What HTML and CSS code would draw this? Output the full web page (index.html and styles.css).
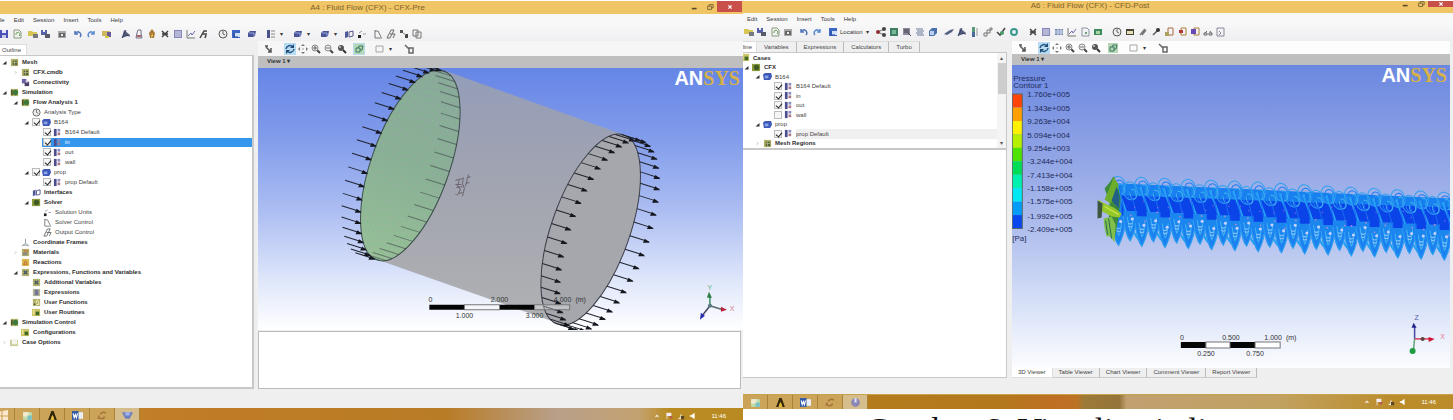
FILE: index.html
```html
<!DOCTYPE html>
<html lang="en">
<head>
<meta charset="utf-8">
<title>Fluid Flow (CFX)</title>
<link rel="stylesheet" href="styles.css">
</head>
<body>
<main class="desk">
  <section class="screen pre">
    <header class="title"><h1>A4 : Fluid Flow (CFX) - CFX-Pre</h1>
      <div class="winctl"><button aria-label="Minimize" data-i="min"></button><button aria-label="Restore" data-i="restore"></button><button class="close" aria-label="Close" data-i="close"></button></div>
    </header>
    <nav class="menu"><button>File</button><button>Edit</button><button>Session</button><button>Insert</button><button>Tools</button><button>Help</button></nav>
    <div class="tools" data-icons="save reload | folder disks | print | undo redo | folder2 || cone jar flame cross sheet chart fx || clock bluebox | block || tree2 v || block v || block v | pages dots | axes clip parts copy"></div>
    <div class="body">
      <aside class="side">
        <div class="tabs"><button class="on">Outline</button></div>
        <ul class="tree">
          <li class="l0 b"><i data-i="open"></i><i data-i="mesh"></i><span>Mesh</span></li>
          <li class="l1 b"><i data-i="shut"></i><i data-i="mesh"></i><span>CFX.cmdb</span></li>
          <li class="l1 b"><i></i><i data-i="conn"></i><span>Connectivity</span></li>
          <li class="l0 b"><i data-i="open"></i><i data-i="globe"></i><span>Simulation</span></li>
          <li class="l1 b"><i data-i="open"></i><i data-i="globe"></i><span>Flow Analysis 1</span></li>
          <li class="l2"><i></i><i data-i="clock"></i><span>Analysis Type</span></li>
          <li class="l2"><i data-i="open"></i><label><input type="checkbox" checked><i data-i="dom"></i><span>B164</span></label></li>
          <li class="l3"><i></i><label><input type="checkbox" checked><i data-i="bound"></i><span>B164 Default</span></label></li>
          <li class="l3"><i></i><label class="sel"><input type="checkbox" checked><i data-i="bound"></i><span>in</span></label></li>
          <li class="l3"><i></i><label><input type="checkbox" checked><i data-i="bound"></i><span>out</span></label></li>
          <li class="l3"><i></i><label><input type="checkbox" checked><i data-i="bound"></i><span>wall</span></label></li>
          <li class="l2"><i data-i="open"></i><label><input type="checkbox" checked><i data-i="dom"></i><span>prop</span></label></li>
          <li class="l3"><i></i><label><input type="checkbox" checked><i data-i="bound"></i><span>prop Default</span></label></li>
          <li class="l2 b"><i></i><i data-i="pages"></i><span>Interfaces</span></li>
          <li class="l2 b"><i data-i="open"></i><i data-i="solver"></i><span>Solver</span></li>
          <li class="l3"><i></i><i data-i="dots"></i><span>Solution Units</span></li>
          <li class="l3"><i></i><i data-i="axes"></i><span>Solver Control</span></li>
          <li class="l3"><i></i><i data-i="clip"></i><span>Output Control</span></li>
          <li class="l1 b"><i></i><i data-i="frame"></i><span>Coordinate Frames</span></li>
          <li class="l1 b"><i data-i="shut"></i><i data-i="mat"></i><span>Materials</span></li>
          <li class="l1 b"><i></i><i data-i="react"></i><span>Reactions</span></li>
          <li class="l1 b"><i data-i="open"></i><i data-i="expr"></i><span>Expressions, Functions and Variables</span></li>
          <li class="l2 b"><i></i><i data-i="expr"></i><span>Additional Variables</span></li>
          <li class="l2 b"><i></i><i data-i="calc"></i><span>Expressions</span></li>
          <li class="l2 b"><i></i><i data-i="ufn"></i><span>User Functions</span></li>
          <li class="l2 b"><i></i><i data-i="urt"></i><span>User Routines</span></li>
          <li class="l0 b"><i data-i="open"></i><i data-i="globe"></i><span>Simulation Control</span></li>
          <li class="l1 b"><i></i><i data-i="urt"></i><span>Configurations</span></li>
          <li class="l0 b"><i data-i="shut"></i><i data-i="doc"></i><span>Case Options</span></li>
        </ul>
      </aside>
      <section class="view">
        <div class="tools vt" data-icons="pick || rotate* move zoomin zoomout zoombox | fit* || square v || probe"></div>
        <div class="bar"><button>View 1 <span>▾</span></button></div>
        <div class="canvas">
          <svg id="tube" viewBox="258 68 484 263" preserveAspectRatio="xMidYMid slice" role="img" aria-label="Cylinder domain">
            <defs>
              <linearGradient id="gb" x1="0" y1="0" x2="0" y2="1"><stop offset="0" stop-color="#949db8"/><stop offset=".5" stop-color="#a3a5b0"/><stop offset="1" stop-color="#b0b1b3"/></linearGradient>
              <linearGradient id="gr" x1="0" y1="0" x2="0" y2="1"><stop offset="0" stop-color="#8ba89c"/><stop offset=".5" stop-color="#8cae98"/><stop offset="1" stop-color="#98bf98"/></linearGradient>
            </defs>
            <path fill="url(#gb)" d="M446 72 L627 137 L600 240 L556 323 L374 259Z"/>
            <ellipse cx="590" cy="230" rx="39" ry="100" transform="rotate(19.5 590 230)" fill="#a5a7ad" stroke="#3c3e48" stroke-width="1"/>
            <ellipse cx="410" cy="166" rx="39" ry="100" transform="rotate(19.5 410 166)" fill="url(#gr)" stroke="#3a4f48" stroke-width="1"/>
            <g id="weave" fill="none" stroke="#7cc486" stroke-width="1" opacity=".55"></g>
            <g id="arrows" stroke="#20232e" fill="#15171f" stroke-width="1"></g>
            <path d="M455 181l7-2M455 185l6 0M456 188l6-1M455 195l7-2M459 181l-2 5 3 4-3 6M463 178l-1 6 2 5-2 8M468 175l-3 12M466 179l4-2M465 184l4-1" fill="none" stroke="#6d6870" stroke-width="1"/>
            <g class="ruler"><path d="M429 305h35v5h-35zM499 305h35v5h-35z" fill="#050505"/><path d="M464 305h35v5h-35zM534 305h35v5h-35z" fill="#fff" fill-opacity=".3" stroke="#777" stroke-width="1"/>
              <text x="430" y="302">0</text><text x="499" y="302">2.000</text><text x="562" y="302">4.000</text><text x="580" y="302">(m)</text><text x="464" y="318">1.000</text><text x="534" y="318">3.000</text></g>
            <g stroke-width="1.5" fill="none"><path d="M709 306V296" stroke="#378a61"/><path d="M709 306l13 4" stroke="#5c6974"/><path d="M709 306l-7 9" stroke="#446"/></g>
            <path d="M706 298l2-6 3 6z" fill="#2f7c40"/><path d="M720 307l6 3-6 2z" fill="#b8213a"/><path d="M699 320l1-7 4 3z" fill="#2b2fb4"/><circle cx="709" cy="306" r="2" fill="#5a7a80"/>
            <g class="ax"><text x="709" y="290" fill="#62b07a">Y</text><text x="731" y="311" fill="#d77a90">X</text></g>
          </svg>
          <div class="logo"><b>AN</b><span>SYS</span></div>
        </div>
        <div class="out"></div>
      </section>
    </div>
    <footer class="task"><div class="apps"><button aria-label="Start" data-i="win"></button><button aria-label="Explorer" data-i="expl"></button><button aria-label="ANSYS" data-i="ans"></button><button aria-label="Word" data-i="word"></button><button aria-label="Mechanical" data-i="swirl"></button><button class="on" aria-label="CFX" data-i="cfx"></button></div><div class="tray"><i data-i="up"></i><i data-i="flag"></i><i data-i="net"></i><i data-i="vol"></i><time>11:46</time></div></footer>
  </section>

  <section class="screen post">
    <header class="title"><h1>A6 : Fluid Flow (CFX) - CFD-Post</h1>
      <div class="winctl"><button aria-label="Minimize" data-i="min"></button><button aria-label="Restore" data-i="restore"></button><button class="close" aria-label="Close" data-i="close"></button></div>
    </header>
    <nav class="menu"><button>Edit</button><button>Session</button><button>Insert</button><button>Tools</button><button>Help</button></nav>
    <div class="tools" data-icons="folder disks reload print | undo redo | bluebox =Location v | share greenbox sheetz lines cube | pencil cone legend inst check ring || cross sheet grid chart page greenpic || clock film brush pen noteo noter notep glasses out"></div>
    <div class="body">
      <aside class="side">
        <div class="tabs"><button class="on cut">Outline</button><button>Variables</button><button>Expressions</button><button>Calculators</button><button>Turbo</button></div>
        <div class="treebox">
          <ul class="tree">
            <li class="l0 b"><i></i><i data-i="urt"></i><span>Cases</span></li>
            <li class="l1 b"><i data-i="open"></i><i data-i="solver"></i><span>CFX</span></li>
            <li class="l2"><i data-i="open"></i><i data-i="dom"></i><span>B164</span></li>
            <li class="l3"><i></i><label><input type="checkbox" checked><i data-i="bound"></i><span>B164 Default</span></label></li>
            <li class="l3"><i></i><label><input type="checkbox" checked><i data-i="bound"></i><span>in</span></label></li>
            <li class="l3"><i></i><label><input type="checkbox" checked><i data-i="bound"></i><span>out</span></label></li>
            <li class="l3"><i></i><label><input type="checkbox"><i data-i="bound"></i><span>wall</span></label></li>
            <li class="l2"><i data-i="open"></i><i data-i="dom"></i><span>prop</span></li>
            <li class="l3"><i></i><label class="dim"><input type="checkbox" checked><i data-i="bound"></i><span>prop Default</span></label></li>
            <li class="l2 b"><i data-i="shut"></i><i data-i="mesh"></i><span>Mesh Regions</span></li>
          </ul>
          <div class="scroll"><span>▴</span><div class="thumb"></div><span>▾</span></div>
        </div>
        <div class="detail"></div>
      </aside>
      <section class="view">
        <div class="tools vt" data-icons="pick || rotate* move zoomin zoomout zoombox | fit || square v || probe"></div>
        <div class="bar"><button>View 1 <span>▾</span></button></div>
        <div class="canvas">
          <svg viewBox="1012 65 438 302" preserveAspectRatio="xMidYMid slice" role="img" aria-label="Propeller wake pressure">
            <g id="legend"></g>
            <g class="key"><text x="1014" y="81">Pressure</text><text x="1014" y="88">Contour 1</text><text x="1013" y="240">[Pa]</text>
              <text x="1028" y="97">1.760e+005</text><text x="1028" y="111">1.343e+005</text><text x="1028" y="124">9.263e+004</text><text x="1028" y="138">5.094e+004</text><text x="1028" y="151">9.254e+003</text><text x="1028" y="164">-3.244e+004</text><text x="1028" y="178">-7.413e+004</text><text x="1028" y="191">-1.158e+005</text><text x="1028" y="204">-1.575e+005</text><text x="1028" y="218">-1.992e+005</text><text x="1028" y="231">-2.409e+005</text></g>
            <g id="wake" fill="none"></g>
            <path d="M1114 176l4 8 3 14-2 18-4 22-2-2-4-14 1-20-5-14 5-6z" fill="#3d8a3c"/>
            <path d="M1114 177l-3 8-6 14 6 4 6-10 2-9z" fill="#6cae2c"/><path d="M1117 186l3 10-1 12-7-8z" fill="#225f86"/>
            <path d="M1099 199l4 3 11 5 8 6-2 4-8-1-9-5-3 7-2-4z" fill="#93c72c"/><path d="M1098 200l5 3-1 14-4 1z" fill="#3c5642"/><path d="M1104 218l8-2 4 8-1 18-4-6-4 0-2-8z" fill="#7fbf4a"/><path d="M1109 218l3 20M1106 220l2 14" stroke="#2a6d58"/>
            <path d="M1105 206l14 8" stroke="#d0e94c"/>
            <g class="ruler"><path d="M1181 341h25v6h-25zM1230 341h25v6h-25z" fill="#050505"/><path d="M1206 341h24v6h-24zM1255 341h25v6h-25z" fill="#fff" stroke="#777" stroke-width="1"/>
              <text x="1182" y="339">0</text><text x="1231" y="339">0.500</text><text x="1273" y="339">1.000</text><text x="1291" y="339">(m)</text><text x="1206" y="355">0.250</text><text x="1255" y="355">0.750</text></g>
            <g fill="none" stroke-width="1.5"><path d="M1414 338v-12" stroke="#4448a0"/><path d="M1414 338h15" stroke="#d4405a"/><path d="M1414 338l-1 10" stroke="#67a277"/></g>
            <path d="M1411 327l2-5 3 5z" fill="#23238c"/><path d="M1428 336l6 2-6 3z" fill="#d01230"/><circle cx="1412" cy="350" r="3" fill="#1f9c40"/><circle cx="1422" cy="338" r="2" fill="#5c4440"/>
            <g class="ax"><text x="1416" y="319" fill="#5358a8">Z</text><text x="1442" y="338" fill="#e07a98">X</text></g>
          </svg>
          <div class="logo"><b>AN</b><span>SYS</span></div>
        </div>
        <div class="tabs low"><button class="on">3D Viewer</button><button>Table Viewer</button><button>Chart Viewer</button><button>Comment Viewer</button><button>Report Viewer</button></div>
      </section>
    </div>
    <footer class="task"><div class="apps"><button aria-label="Explorer" data-i="expl"></button><button aria-label="ANSYS" data-i="ans"></button><button aria-label="Word" data-i="word"></button><button aria-label="Mechanical" data-i="swirl"></button><button class="on" aria-label="CFD-Post" data-i="post"></button></div><div class="tray"><i data-i="up"></i><i data-i="flag"></i><i data-i="net"></i><i data-i="vol"></i><time>11:46</time></div></footer>
    <p class="caption">Gambar 6. Visualisasi aliran</p>
  </section>
</main>
<script src="draw.js"></script>
</body>
</html>
```

FILE: styles.css
```css
* { box-sizing: border-box; }
body { margin: 0; background: #fff; font: 6px/10px "Liberation Sans", Arial, sans-serif; color: #333; overflow: hidden; }
button { font: inherit; color: inherit; background: none; border: 0; padding: 0; margin: 0; }
.desk { display: grid; grid-template-columns: 743fr 710fr; height: 100vh; }
.screen { display: flex; flex-direction: column; min-width: 0; min-height: 0; padding-top: 1px; overflow: hidden; }
.title { position: relative; flex: none; height: 13px; background: #efc565; overflow: hidden; }
.post .title { height: 12px; }
.title h1 { margin: 0; text-align: center; font: 8px/13px "Liberation Sans", Arial, sans-serif; color: #80622c; }
.post .title h1 { line-height: 10px; padding-right: 16px; }
.pre .title h1 { padding-right: 8px; }
.winctl { position: absolute; right: 1px; top: 0; display: flex; height: 11px; }
.post .winctl { right: 0; height: 6px; }
.winctl button { width: 15px; display: flex; align-items: center; justify-content: center; }
.winctl .close { width: 25px; background: #c9504a; }
.winctl svg { width: 8px; height: 8px; }
.menu { flex: none; display: flex; gap: 9px; height: 12px; padding-left: 4px; background: #f8f8f9; color: #3a3a3a; }
.pre .menu { margin-left: -9px; }
.tools { flex: none; display: flex; align-items: center; height: 15px; background: linear-gradient(#f7f7f8, #efeff1); overflow: hidden; }
.post > .tools { height: 14px; }
.pre > .tools { margin-left: -2px; height: 15px; }
.tools button { flex: none; display: flex; align-items: center; justify-content: center; min-width: 12px; height: 12px; margin-right: 1px; }
.tools button.hot { background: #b7dcf2; }
.tools svg { width: 10px; height: 10px; flex: none; }
.tools .more { min-width: 7px; width: 7px; font-size: 6px; }
.tools .gap { flex: none; width: 3px; }
.body { flex: 1; min-height: 0; display: grid; background: #efeff0; }
.pre .body { grid-template-columns: 254fr 485fr; column-gap: 4px; padding-bottom: 19px; }
.post .body { grid-template-columns: 264fr 438fr; column-gap: 5px; padding: 2px 3px 16px 0; }
.side, .view { display: flex; flex-direction: column; min-width: 0; min-height: 0; }
.pre .side { padding-top: 3px; }
.tabs { flex: none; display: flex; height: 11px; color: #444; }
.tabs button { padding: 0 7px; border-right: 1px solid #bbb; border-top: 1px solid #ddd; white-space: nowrap; }
.tabs .on { background: #fff; padding: 0 5px 0 2px; border-color: #ddd; }
.tabs .cut { width: 14px; direction: rtl; overflow: hidden; padding: 0 4px 0 0; }
.low { height: 10px; }
.low .on { padding: 0 6px; }
.low button { border-top: 0; border-bottom: 1px solid #ccc; padding: 0 6px; line-height: 9px; }
.tree { flex: 1; min-height: 0; margin: 0; padding: 1px 0 0; list-style: none; background: #fff; color: #444; }
.pre .tree { border: solid #c8c8cb; border-width: 1px 2px 2px 0; }
.tree li, .tree label { display: flex; align-items: center; height: 10px; white-space: nowrap; }
.tree label { flex: 1; gap: 2px; padding-left: 1px; margin-left: 1px; height: 9px; }
.tree i { flex: none; display: flex; width: 9px; margin-right: 3px; }
.tree li > i:first-child { width: 8px; margin-right: 2px; justify-content: center; }
.tree label i { margin-right: 1px; }
.tree li > i:first-child + label { margin-left: -1px; }
.tree i svg { width: 9px; height: 9px; }
.tree li > i:first-child svg { width: 5px; height: 5px; }
.l1 { padding-left: 11px; } .l2 { padding-left: 22px; } .l3 { padding-left: 33px; }
.b { font-weight: bold; color: #2c2c2c; }
.tree .sel { background: #3596ee; color: #fff; }
.tree .dim span { flex: 1; background: #f0f0f1; }
.tree input { appearance: none; position: relative; flex: none; width: 8px; height: 8px; margin: 0; border: 1px solid #bcbcbc; background: #f6f6f6; }
.tree input:checked::after { content: ""; position: absolute; left: 2px; top: 0; width: 3px; height: 5px; border: solid #222; border-width: 0 1px 1px 0; transform: rotate(40deg); }
.treebox { flex: none; display: flex; height: 98px; background: #fff; border: solid #c8c8cb; border-width: 1px 1px 2px 0; overflow: hidden; }
.treebox .tree { display: flex; flex-direction: column; margin-left: -12px; padding: 0; }
.treebox .tree li { flex: 1; min-height: 0; }
.scroll { width: 9px; display: flex; flex-direction: column; align-items: center; background: #f4f4f4; color: #555; font-size: 6px; }
.thumb { width: 8px; height: 31px; background: #cdcdcd; margin-bottom: auto; }
.detail { flex: 1; background: #fff; border: solid #c8c8cb; border-width: 0 1px 1px 0; }
.vt { height: 15px; background: #f6f6f7; padding-left: 5px; }
.vt .gap { width: 4px; }
.post .vt { height: 13px; background: #fdfdfd; }
.bar { flex: none; height: 12px; background: #bfbfc0; padding-left: 9px; font-weight: bold; color: #333; }
.post .bar { height: 11px; }
.canvas { position: relative; flex: 1; min-height: 0; background: linear-gradient(#6686e6, #7f9aea 25%, #adbef2 55%, #dde5fa 80%, #fff); overflow: hidden; }
.post .canvas { background: linear-gradient(#6b88e0, #8a9fe4 25%, #b0bfed 55%, #d8e2f8 80%, #fdfdff); }
.canvas > svg { display: block; width: 100%; height: 100%; }
.logo { position: absolute; right: 3px; top: 0; font-size: 20px; line-height: 21px; color: #fff; }
.logo span { font-family: "Liberation Serif", serif; font-weight: bold; color: #d6b04a; }
.out { flex: none; height: 58px; margin: 1px 2px 0 0; border: 1px solid #b9bcbf; background: #fff; }
.ruler text { font-size: 7px; fill: #333; text-anchor: middle; }
.ax text { font-size: 7px; text-anchor: middle; }
.key text { font-size: 8px; fill: #1f2d5c; }
.task { flex: none; display: flex; justify-content: space-between; height: 15px; background: linear-gradient(90deg, #c3842c, #bf7c26 30%, #b97c26 60%, #b8a08a 75%, #c4a270 86%, #b98c22 90%, #b98a22); color: #fff; }
.pre .task { margin-bottom: -3px; }
.post .task { background: linear-gradient(90deg, #b57f1e, #b3781c 36%, #bf6f24 44%, #bd7224 47%, #9c7a38 48%, #95743a 53%, #c2a070 54%, #c2a262 75%, #bb8c2a 92%); border-top: 1px solid #c6a24a; }
.apps { display: flex; }
.apps button { width: 25px; background: #cba45a; border-right: 1px solid #ab8238; display: flex; justify-content: center; align-items: center; }
.pre .apps { margin-left: -10px; }
.pre .apps .on, .apps .on { background: #d6be8c; }
.apps svg { width: 11px; height: 11px; }
.tray { display: flex; align-items: center; gap: 4px; padding-right: 17px; }
.tray i { display: flex; }
.tray svg { width: 8px; height: 8px; }
.tray time { margin-left: 10px; }
.caption { flex: none; margin: 4px 0 -27px; padding-left: 123px; font: 34px/34px "Liberation Serif", serif; color: #111; white-space: nowrap; }
```

FILE: draw.js
```javascript
const rect = (x, y, w, h, c) => `<rect x="${x}" y="${y}" width="${w}" height="${h}" fill="${c}"/>`;
const line = (d, c, w = 1) => `<path d="${d}" fill="none" stroke="${c}" stroke-width="${w}"/>`;
const fill = (d, c) => `<path d="${d}" fill="${c}"/>`;
const dot = (x, y, r, c) => `<circle cx="${x}" cy="${y}" r="${r}" fill="${c}"/>`;
const green = rect(1, 1, 8, 8, '#b3b26a');
const lens = line('M6 6l3 3', '#444', 2) + '<circle cx="4" cy="4" r="3" fill="#eee" stroke="#888"/>';
const icons = {
  min: rect(1, 6, 6, 2, '#5a4a2a'),
  restore: line('M2 4h5v4H2zM4 4V2h5v4H7', '#6a5528'),
  close: line('M3 3l4 4M7 3l-4 4', '#fff', 1.5),
  save: rect(1, 1, 8, 8, '#4a52b8') + rect(3, 1, 4, 3, '#e8e8f8') + rect(3, 6, 4, 3, '#c8cce8'),
  reload: line('M2 1h5l2 2v6H2z', '#8a9a80') + line('M4 6a2 2 0 1 1 3 1', '#5a9a4a'),
  folder: fill('M0 2h4l1 1h4v4H0z', '#d6c455') + rect(5, 5, 5, 4, '#77777f'),
  disks: rect(0, 1, 6, 5, '#5560a8') + rect(2, 1, 2, 2, '#eee') + rect(4, 5, 5, 4, '#555a68'),
  print: rect(1, 2, 8, 7, '#aaa') + rect(2, 4, 6, 4, '#666') + rect(4, 5, 2, 2, '#eee'),
  undo: line('M2 2v3h3M2 5a3 3 0 1 1 5 3', '#5074b8', 1.5),
  redo: line('M8 2v3H5M8 5a3 3 0 1 0-5 3', '#5a8ad0', 1.5),
  folder2: fill('M0 2h8v5H0z', '#cdb860') + rect(5, 3, 4, 5, '#6a5a9a') + rect(3, 7, 4, 2, '#d8cc40'),
  cone: fill('M1 9l2-8 6 5z', '#5a607c') + line('M1 9l4-8M4 6l5 1', '#333e66'),
  jar: line('M4 1h3v3l1 5H2l1-5z', '#77708a') + rect(3, 6, 4, 2, '#a66'),
  flame: fill('M5 0l3 4-1 5H3L2 4z', '#a87838') + fill('M5 4l1 3-2 2z', '#f2d060'),
  cross: line('M2 2l6 6M8 2l-6 6M2 5h6', '#454545', 1.5),
  sheet: rect(1, 1, 8, 8, '#8588b8') + line('M2 3h6M2 5h6M2 7h6', '#e4e4f4'),
  sheetz: rect(1, 1, 7, 7, '#8a8aa0') + line('M2 3h5M2 5h5M6 6l3 3', '#444'),
  chart: line('M1 1v8h8', '#777') + line('M2 7l3-3 1 2 3-4', '#6a70b0'),
  fx: line('M1 9l4-7 3 0M3 5h5M7 6l-1 3', '#444', 1.5),
  clock: '<circle cx="5" cy="5" r="4" fill="#eee" stroke="#5a5a5a"/>' + line('M5 2v3l2 1', '#666'),
  bluebox: rect(1, 1, 8, 8, '#3c68c4') + rect(4, 4, 5, 4, '#cfe0f8') + line('M3 4v4h4', '#234a9a'),
  block: fill('M1 4l2-2h6l-1 5-2 1H1z', '#4a5598') + line('M2 4h5v3', '#99a6dd'),
  tree2: rect(1, 1, 3, 8, '#4a5088') + line('M5 2h4M5 5h4M5 8h4', '#888'),
  bound: rect(1, 1, 3, 8, '#4c4e90') + rect(5, 1, 3, 3, '#8a8cc0') + rect(5, 5, 3, 3, '#a87888'),
  pages: fill('M1 3l3-1v6l-3 1z', '#505898') + line('M5 3l4-1v5l-4 1z', '#55558a'),
  dots: fill('M1 6h3v3H1z', '#222') + line('M2 4l3-2M6 5h3', '#99a'),
  axes: line('M2 1v8h7M2 2h3l3 6', '#777'),
  clip: line('M1 9l4-8h3L4 9zM4 5h5L7 9', '#6a6a6a'),
  parts: rect(1, 1, 3, 3, '#555') + rect(6, 5, 3, 4, '#444') + line('M4 4l3 2', '#888'),
  copy: line('M1 1h5v6H1zM4 3h5v6H4z', '#777'),
  pick: line('M1 2h3M2 3l5 5M7 4v4H4', '#555', 1.5),
  rotate: line('M1 5a4 4 0 0 1 7-2M9 5a4 4 0 0 1-7 2', '#2a5b88', 1.5) + fill('M9 0v4H5zM1 10V6h4z', '#234b74'),
  move: fill('M5 0l2 2H3zM5 10l2-2H3zM0 5l2-2v4zM10 5L8 3v4z', '#777') + rect(4, 4, 2, 2, '#ccc'),
  zoomin: lens + line('M2 4h4M4 2v4', '#666'), zoomout: lens + line('M2 4h4', '#777'),
  zoombox: line('M6 6l3 3', '#333', 2) + dot(4, 4, 3, '#555') + dot(3, 3, 1, '#ccc'),
  fit: rect(0, 0, 10, 10, '#b5d7b4') + line('M2 4h4v4H2zM4 4l1-2h4l-1 4H6', '#3f7864'),
  square: line('M1 2h7v6H1z', '#a5a5a5'),
  probe: line('M1 1l4 4M5 4h4v5H5z', '#666', 1.5),
  share: line('M8 2L2 5l6 3', '#666') + dot(8, 2, 2, '#444') + dot(2, 5, 2, '#833') + dot(8, 8, 2, '#444'),
  greenbox: rect(1, 1, 8, 8, '#3f7f62') + rect(3, 3, 4, 4, '#79b89a'),
  lines: line('M1 2h7M2 4h7M1 6h7M2 8h7', '#6d7698'),
  cube: fill('M1 4l3-3h5v5L6 9H1z', '#4a72ac') + rect(2, 4, 4, 4, '#bdd1ee'),
  pencil: fill('M0 7l6-4 4-1-2 3-5 3z', '#555f80'),
  legend: rect(2, 0, 3, 5, '#589a7a') + rect(2, 5, 3, 5, '#4a6a9a') + line('M7 1v8', '#999'),
  inst: line('M1 6h3v3H1zM4 3h3v3H4zM7 1h2v2H7z', '#777'),
  check: line('M1 5l3 3 5-7', '#444', 1.5) + dot(6, 6, 2, '#4a9a6a'),
  ring: '<circle cx="5" cy="5" r="3" fill="#eef" stroke="#3a9a8a" stroke-width="2"/>',
  grid: rect(1, 2, 8, 6, '#6f82aa') + line('M1 4h8M1 6h8M4 2v6M7 2v6', '#d4daf0'),
  page: line('M2 1h5l2 2v6H2z', '#8a94a0') + dot(6, 6, 1, '#385'),
  greenpic: rect(1, 2, 8, 6, '#3d8a5c') + rect(3, 4, 4, 3, '#a9d4a8'),
  film: rect(1, 2, 8, 6, '#4a4438') + rect(2, 4, 6, 3, '#e6e0b8'),
  brush: line('M2 8l5-6M4 8l4-5', '#777', 1.5), pen: line('M2 8l5-5', '#555', 1.5) + dot(7, 3, 2, '#333'),
  noteo: line('M4 1h5v7H4z', '#a86a3c') + rect(1, 5, 4, 4, '#aaa060'),
  noter: line('M4 1h5v7H4z', '#a8803c') + rect(2, 3, 4, 3, '#b03434'),
  notep: line('M4 1h5v7H4z', '#a8803c') + rect(1, 2, 5, 5, '#6a48b8'),
  glasses: line('M1 6h3v2H1zM6 6h3v2H6zM2 6l2-2M8 6L7 4', '#666'),
  out: line('M1 1h7v8H1zM3 4l2 2-2 2', '#8a8a9a'),
  open: fill('M9 2v7H1z', '#333'), shut: line('M3 2l4 3-4 3', '#aaa'),
  mesh: green + rect(3, 3, 5, 5, '#53603a') + line('M3 5h5M5 3v5', '#a9b080'),
  globe: green + dot(6, 5, 3, '#3c7a3c') + rect(1, 2, 2, 6, '#54551f'),
  conn: rect(1, 1, 5, 5, '#6a62a8') + rect(4, 4, 5, 5, '#4c3f68') + rect(5, 3, 3, 2, '#dcd'),
  dom: fill('M0 3l2-2h7l1 4-2 4H1z', '#3d58b8') + rect(2, 4, 4, 3, '#8aa4e4'),
  solver: rect(0, 1, 9, 8, '#8a9a3c') + dot(5, 5, 3, '#3f5a24'),
  frame: line('M5 1v5l-4 3M5 6l4 3M2 8h6', '#8a9aa0'),
  mat: green + rect(3, 2, 5, 3, '#b88a50') + rect(2, 5, 5, 3, '#86888a'),
  react: rect(1, 1, 8, 8, '#dcb850') + line('M3 7l2-4 2 4z', '#b86a2c'),
  expr: green + line('M3 3l4 4M7 3L3 7', '#456', 1.5),
  calc: rect(1, 1, 8, 8, '#b4b494') + rect(3, 2, 4, 6, '#73759a'),
  ufn: green + line('M3 8l3-6 2 5z', '#f2eec0') + rect(2, 6, 2, 2, '#553'),
  urt: rect(0, 1, 9, 8, '#ccc566') + rect(4, 4, 4, 4, '#3e6a28') + line('M2 2v5', '#fff6b0'),
  doc: rect(0, 2, 9, 7, '#c9cc9a') + rect(2, 1, 6, 6, '#f4f4ec'),
  win: fill('M0 2l4-1v4H0zM5 1l5-1v5H5zM0 6h4v4L0 9zM5 6h5v4H5z', '#fbe8cc'),
  expl: rect(1, 2, 8, 7, '#bfdca8') + rect(1, 2, 5, 4, '#f0ead0') + rect(5, 5, 4, 4, '#7cc0c4'),
  ans: fill('M1 9l3-8h2l3 8H7L5 4 3 9z', '#2e2608') + rect(4, 6, 2, 3, '#e8c024'),
  word: rect(0, 1, 6, 8, '#2f57a8') + rect(6, 2, 4, 6, '#e8eefa') + line('M1 3l1 4 1-3 1 3 1-4', '#fff'),
  swirl: line('M8 3a3 3 0 0 0-5 1M2 7a3 3 0 0 0 5-1M2 5l-1 3', '#a8763c', 1.5),
  cfx: fill('M0 2h10L7 8H3z', '#6c7fc0') + rect(3, 2, 4, 3, '#a2b4ea'),
  post: dot(5, 5, 4, '#8c86b4') + rect(4, 1, 2, 4, '#dcdcf4'),
  up: fill('M2 6l3-3 3 3z', '#f0e6d8'), flag: rect(2, 1, 6, 4, '#f4ecf0') + rect(2, 1, 1, 8, '#eee') + rect(6, 5, 3, 3, '#b55'),
  net: line('M2 8h6M5 8V3', '#eee', 1.5) + rect(5, 5, 4, 4, '#5a4826'), vol: fill('M1 4h2l4-3v8L3 6H1z', '#fff')
};
const svg = n => `<svg viewBox="0 0 10 10" aria-hidden="true">${icons[n]}</svg>`;
document.querySelectorAll('[data-i]').forEach(e => { e.innerHTML = svg(e.dataset.i); });
document.querySelectorAll('[data-icons]').forEach(bar => {
  bar.innerHTML = bar.dataset.icons.split(' ').map(t => {
    if (t === '|') return '<span class="gap"></span>';
    if (t === '||') return '<span class="gap"></span><span class="gap"></span>';
    if (t === 'v') return '<button class="more" aria-label="More">▾</button>';
    if (t[0] === '=') return `<button>${t.slice(1)}</button>`;
    const n = t.replace('*', '');
    return `<button aria-label="${n}"${n === t ? '' : ' class="hot"'}>${svg(n)}</button>`;
  }).join('');
});

/* Flow arrows around both rims of the cylinder */
const tilt = 19.5 * Math.PI / 180;
const rim = (cx, cy, t) => {
  const u = 39 * Math.cos(t), v = 100 * Math.sin(t);
  return [cx + u * Math.cos(tilt) - v * Math.sin(tilt), cy + u * Math.sin(tilt) + v * Math.cos(tilt)];
};
let arrows = '';
const arrow = (x, y, head, o) => {
  arrows += `<g opacity="${o}"><path d="M${x} ${y}l19 6"/>` + (head ? `<path stroke="none" d="M${x + 20} ${y + 7}l-7 0 2-4z"/>` : '') + '</g>';
};
for (let i = 0; i < 44; i++) {
  const t = i * Math.PI / 22 + .07;
  const [x, y] = rim(410, 166, t);
  const inside = Math.cos(t) > 0;
  arrow(x - 19, y - 6, !inside, inside ? .45 : 1);
  const [a, b] = rim(590, 230, t);
  arrow(a, b, true, 1);
}
document.getElementById('arrows').innerHTML = arrows;
let weave = '';
for (let i = -8; i < 9; i++) {
  const k = i / 9, h = 95 * Math.sqrt(1 - k * k);
  const x = 410 + 36 * k, y = 166 + 12 * k;
  weave += `<path stroke-dasharray="5 3" d="M${x + h * .33} ${y - h * .94}Q${x - 6} ${y} ${x - h * .33} ${y + h * .94}"/>`;
}
document.getElementById('weave').innerHTML = weave;

/* Pressure colour bar */
document.getElementById('legend').innerHTML = ['#ff4408', '#ff9f00', '#fff200', '#b4f000', '#4fe400', '#00de58', '#00f0b0', '#00e8f4', '#009cf8', '#0846ee']
  .map((c, i) => rect(1013, 94 + i * 13.4, 10, 13.4, c)).join('') + line('M1013 94h10v134h-10z', '#5a6a6a');

/* Helical wake behind the propeller */
let seed = 7;
const rnd = () => (seed = seed * 16807 % 2147483647) / 2147483647;
const upper = x => 176 + (x - 1120) * .04 + Math.max(0, x - 1250) * .014;
const lower = x => 245 + (x - 1120) * .045;
let wake = fill(`M1116 ${upper(1116) + 7}L1452 ${upper(1452) + 6}V${lower(1452) - 18}L1116 ${lower(1116) - 20}Z`, '#1582ee')
  + fill(`M1122 ${upper(1122) + 19}L1452 ${upper(1452) + 15}V${lower(1452) - 27}L1122 ${lower(1122) - 30}Z`, '#0a44e8');
for (let i = 0; i < 30; i++) {
  const x = 1119 + i * 11.6, small = i % 2 ? 5 : 0, t = upper(x) + small, b = lower(x) - small;
  wake += fill(`M${x - 7} ${b - 30}h14q-1 18-6 28l-1 2-2-2q-5-10-5-28z`, '#1a86ee');
  for (let k = 0; k < 3; k++) {
    const w = 7 - k * 2, c = ['#2e9ff0', '#1f7cf4', '#45b2f2'][k];
    wake += `<ellipse cx="${x + k}" cy="${t + 9 + k * 2}" rx="${w}" ry="${9 - k * 2}" transform="rotate(-14 ${x} ${t + 9})" stroke="${c}"/>`;
    wake += line(`M${x - w} ${b - 24}Q${x - w + 2} ${b - 8 - k * 2} ${x} ${b - k * 5}Q${x + w - 1} ${b - 12} ${x + w} ${b - 24}`, c);
  }
  if (!small) wake += line(`M${x - 2} ${t + 10}Q${x + 6} ${t + 30} ${x + 10} ${b - 26}T${x + 20} ${b - 6}`, '#24a0f4', 2);
  wake += line(`M${x} ${t + 8}Q${x + 4} ${t + 24} ${x + 7} ${b - 24}`, '#1a6cf0');
  wake += dot(x + 2, b - 24 + rnd() * 4, 1.5, '#c9d2fa') + dot(x + rnd() * 8 - 2, b - 30 + rnd() * 6, .9, '#a68ad8') + dot(x + rnd() * 6, t + 20 + rnd() * 10, .7, '#7a6adc');
  wake += line(`M${x - 2} ${b - 18}q2 2 4 0M${x - 2} ${b - 15}q2 2 4 0`, '#8cc4f8');
}
document.getElementById('wake').innerHTML = wake;
```
